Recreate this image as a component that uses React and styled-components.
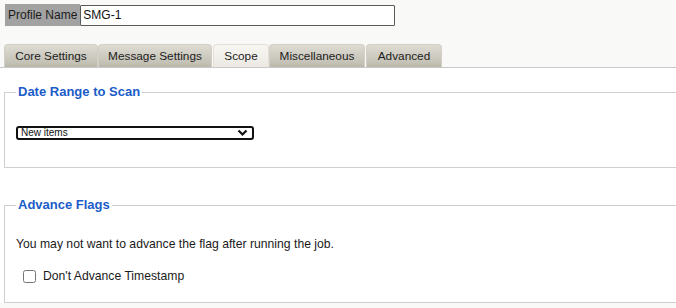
import styled, { createGlobalStyle } from "styled-components";

const GlobalStyle = createGlobalStyle`
  html, body {
    margin: 0;
    padding: 0;
    background: #f9f9f7;
    overflow: hidden;
  }
  body {
    font-family: "Liberation Sans", Arial, sans-serif;
    font-size: 12px;
    color: #1a1a1a;
  }
`;

const Page = styled.div`
  width: 676px;
  height: 308px;
  overflow: hidden;
`;

const ProfileRow = styled.div`
  display: flex;
  align-items: center;
  padding: 4px 0 0 5px;
`;

const ProfileLabel = styled.label`
  display: flex;
  align-items: center;
  height: 22px;
  padding: 0 3px 0 3px;
  background: #a2a2a2;
  color: #1c1c1c;
  font-size: 12px;
`;

const ProfileInput = styled.input`
  box-sizing: border-box;
  width: 315px;
  height: 21px;
  margin: 0;
  padding: 0 2px;
  border: 1px solid #5a5a5a;
  border-radius: 1px;
  background: #fff;
  font-family: "Liberation Sans", Arial, sans-serif;
  font-size: 12px;
  color: #111;
`;

const TabBar = styled.div`
  display: flex;
  margin-top: 18px;
  padding-left: 4px;
  border-bottom: 1px solid #c9c9c9;
`;

const Tab = styled.div`
  box-sizing: border-box;
  display: flex;
  align-items: center;
  justify-content: center;
  width: ${({ $w }) => $w}px;
  height: 23px;
  margin-left: ${({ $gapLeft }) => $gapLeft || 0}px;
  border-radius: 4px 4px 0 0;
  border: 1px solid ${({ $active }) => ($active ? "#e2e0d8" : "#d2d0c6")};
  border-bottom: none;
  background: ${({ $active }) =>
    $active
      ? "linear-gradient(#f7f6f2, #ebe9e2)"
      : "linear-gradient(#dedcd3, #c4c1b6 80%, #b9b6aa)"};
  color: #1c1c1c;
  font-size: 11.8px;
`;

const Panel = styled.div`
  background: #fff;
  padding: 16px 0 0 4px;
`;

const Group = styled.fieldset`
  margin: ${({ $top }) => $top || 0}px -30px 0 0;
  padding: ${({ $padTop }) => $padTop}px 12px ${({ $bottom }) => $bottom}px 11px;
  border: 1px solid #cfcfcf;
  min-width: 0;
`;

const Legend = styled.legend`
  padding: 0 2px;
  color: #1a5cc8;
  font-size: 13px;
  font-weight: bold;
  line-height: 16px;
`;

const SelectWrap = styled.div`
  position: relative;
  width: 238px;
`;

const Select = styled.select`
  display: block;
  box-sizing: border-box;
  width: 238px;
  height: 14px;
  margin: 0;
  padding: 0 0 0 3px;
  border: 2px solid #111;
  border-radius: 3px;
  background: #fff;
  appearance: none;
  font-family: "Liberation Sans", Arial, sans-serif;
  font-size: 10px;
  line-height: 10px;
  color: #111;
`;

const Chevron = styled.svg`
  position: absolute;
  right: 6px;
  top: 3px;
  pointer-events: none;
`;

const Note = styled.p`
  margin: 0;
  font-size: 12.2px;
  line-height: 15px;
  color: #1a1a1a;
`;

const CheckRow = styled.label`
  display: flex;
  align-items: center;
  gap: 7px;
  margin-top: 17px;
  padding-left: 7px;
  font-size: 12.2px;
  color: #1a1a1a;
`;

const Check = styled.input`
  width: 13px;
  height: 13px;
  margin: 0;
`;

const tabs = [
  { label: "Core Settings", w: 94 },
  { label: "Message Settings", w: 114 },
  { label: "Scope", w: 56, active: true, gapLeft: 1 },
  { label: "Miscellaneous", w: 96 },
  { label: "Advanced", w: 76, gapLeft: 1 },
];

export default function App() {
  return (
    <Page>
      <GlobalStyle />
      <ProfileRow>
        <ProfileLabel htmlFor="profile-name">Profile Name</ProfileLabel>
        <ProfileInput id="profile-name" defaultValue="SMG-1" />
      </ProfileRow>
      <TabBar>
        {tabs.map((t) => (
          <Tab key={t.label} $w={t.w} $active={t.active} $gapLeft={t.gapLeft}>
            {t.label}
          </Tab>
        ))}
      </TabBar>
      <Panel>
        <Group $padTop={26} $bottom={27}>
          <Legend>Date Range to Scan</Legend>
          <SelectWrap>
            <Select defaultValue="new">
              <option value="new">New items</option>
            </Select>
            <Chevron width="11" height="8" viewBox="0 0 11 8">
              <path d="M1.5 1.5 L5.5 5.5 L9.5 1.5" fill="none" stroke="#111" strokeWidth="2.2" />
            </Chevron>
          </SelectWrap>
        </Group>
        <Group $top={29} $padTop={24} $bottom={19}>
          <Legend>Advance Flags</Legend>
          <Note>You may not want to advance the flag after running the job.</Note>
          <CheckRow>
            <Check type="checkbox" />
            Don't Advance Timestamp
          </CheckRow>
        </Group>
      </Panel>
    </Page>
  );
}
